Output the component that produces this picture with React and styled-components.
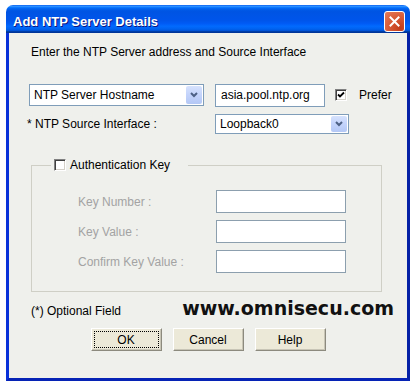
import React from 'react';
import styled, { createGlobalStyle } from 'styled-components';

const Global = createGlobalStyle`
  body {
    margin: 0;
    background: #ffffff;
    font-family: "Liberation Sans", Arial, sans-serif;
    font-size: 12px;
    color: #000;
  }
`;

const Window = styled.div`
  margin: 5px 0 0 6px;
  width: 404px;
  display: flex;
  flex-direction: column;
`;

const TitleBar = styled.div`
  height: 28px;
  box-sizing: border-box;
  padding: 5px 5px 0 7px;
  display: flex;
  align-items: center;
  justify-content: space-between;
  border-radius: 7px 7px 0 0;
  background: linear-gradient(to bottom, #0058ee 0%, #3593ff 4%, #288eff 6%, #127dff 8%, #036ffc 10%, #0262ee 14%, #0057e5 20%, #0054e3 24%, #0055eb 56%, #005bf5 66%, #026afe 76%, #0062ef 86%, #0052d6 92%, #0040ab 94%, #003092 100%);
`;

const Title = styled.span`
  color: #fff;
  font-family: "Liberation Sans", Arial, sans-serif;
  font-weight: bold;
  font-size: 13px;
  text-shadow: 1px 1px 0 #0a1883;
`;

const CloseButton = styled.div`
  width: 21px;
  height: 21px;
  box-sizing: border-box;
  border: 1px solid #fff;
  border-radius: 3px;
  background: radial-gradient(circle at 80% 85%, #c23c1a 0%, #d85a36 50%, #e47d5d 100%);
  display: flex;
  align-items: center;
  justify-content: center;
`;

const Body = styled.div`
  height: 345px;
  border: 3px solid #0831d9;
  border-top: none;
  border-right-color: #0521a6;
  border-bottom-color: #0623b5;
  background: #eff0ec;
  display: flex;
  flex-direction: column;
`;

const Intro = styled.div`
  margin: 12px 0 0 22px;
  line-height: 14px;
`;

const Row = styled.div`
  display: flex;
  align-items: center;
  margin-top: ${p => p.$top}px;
  padding-left: ${p => p.$left}px;
  height: ${p => p.$height}px;
`;

const Combo = styled.div`
  width: ${p => p.$width}px;
  height: ${p => p.$height}px;
  box-sizing: border-box;
  border: 1px solid #7f9db9;
  background: #fff;
  display: flex;
  align-items: center;
  padding: 1px;
`;

const ComboText = styled.span`
  flex: 1;
  padding-left: 3px;
  white-space: nowrap;
`;

const ArrowButton = styled.div`
  width: 16px;
  align-self: stretch;
  border-radius: 2px;
  background: linear-gradient(to bottom, #d6e2fd 0%, #c3d3fb 50%, #b3c7f5 100%);
  display: flex;
  align-items: center;
  justify-content: center;
`;

const TextField = styled.div`
  width: ${p => p.$width}px;
  height: ${p => p.$height}px;
  box-sizing: border-box;
  border: 1px solid ${p => (p.$disabled ? '#8c9fae' : '#7f9db9')};
  background: #fff;
  padding-left: 5px;
  display: flex;
  align-items: center;
  white-space: nowrap;
`;

const Check = styled.div`
  width: 12px;
  height: 12px;
  box-sizing: border-box;
  border-top: 1px solid #808080;
  border-left: 1px solid #808080;
  border-bottom: 1px solid #fff;
  border-right: 1px solid #fff;
  box-shadow: inset 1px 1px 0 #404040, inset -1px -1px 0 #d4d0c8;
  background: #fff;
  display: flex;
  align-items: center;
  justify-content: center;
  flex-shrink: 0;
`;

const Label = styled.span`
  color: ${p => (p.$disabled ? '#a3a3a3' : '#000')};
  margin-left: ${p => p.$gap || 0}px;
  white-space: nowrap;
`;

const Group = styled.fieldset`
  margin: 24px 0 0 22px;
  width: 351px;
  box-sizing: border-box;
  padding: 18px 0 18px 0;
  border: 1px solid #cfcfc6;
  display: flex;
  flex-direction: column;
  gap: 7px;
  min-width: 0;
`;

const Legend = styled.legend`
  margin-left: 19px;
  padding: 0 18px 0 3px;
  height: 14px;
  display: flex;
  align-items: center;
  gap: 4px;
`;

const KeyRow = styled.div`
  padding-left: 46px;
  display: grid;
  grid-template-columns: 138px 130px;
  align-items: center;
`;

const Footer = styled.div`
  margin-top: 5px;
  height: 22px;
  padding: 0 13px 0 22px;
  display: flex;
  align-items: baseline;
  justify-content: space-between;
`;

const Brand = styled.span`
  font-family: "DejaVu Sans", Verdana, sans-serif;
  font-weight: bold;
  font-size: 19px;
  color: #111;
`;

const Buttons = styled.div`
  margin-top: 9px;
  display: flex;
  justify-content: center;
  gap: 11px;
`;

const Button = styled.div`
  width: 71px;
  height: 23px;
  box-sizing: border-box;
  background: #ece9d8;
  border-top: 1px solid #fff;
  border-left: 1px solid #fff;
  border-right: 1px solid #8c8a7e;
  border-bottom: 1px solid #8c8a7e;
  box-shadow: inset -1px -1px 0 #c8c5b6;
  display: flex;
  align-items: center;
  justify-content: center;
  padding: 2px;
`;

const Focus = styled.div`
  flex: 1;
  align-self: stretch;
  border: 1px dotted ${p => (p.$focused ? '#000' : 'transparent')};
  display: flex;
  align-items: center;
  justify-content: center;
`;

const Chevron = () => (
  <svg width="8" height="6" viewBox="0 0 8 6">
    <path d="M1 1 L4 4 L7 1" fill="none" stroke="#4d6185" strokeWidth="2" />
  </svg>
);

const Tick = () => (
  <svg width="8" height="8" viewBox="0 0 8 8">
    <path d="M1 3.5 L3 5.5 L7 1.5" fill="none" stroke="#000" strokeWidth="1.8" />
  </svg>
);

const CloseX = () => (
  <svg width="11" height="11" viewBox="0 0 11 11">
    <path d="M1.5 1.5 L9.5 9.5 M9.5 1.5 L1.5 9.5" stroke="#fff" strokeWidth="2" strokeLinecap="square" />
  </svg>
);

const keyFields = ['Key Number :', 'Key Value :', 'Confirm Key Value :'];

const App = () => {
  return (
    <>
      <Global />
      <Window>
        <TitleBar>
          <Title>Add NTP Server Details</Title>
          <CloseButton>
            <CloseX />
          </CloseButton>
        </TitleBar>
        <Body>
          <Intro>Enter the NTP Server address and Source Interface</Intro>

          <Row $top={25} $left={20} $height={22}>
            <Combo $width={175} $height={22}>
              <ComboText>NTP Server Hostname</ComboText>
              <ArrowButton><Chevron /></ArrowButton>
            </Combo>
            <TextField $width={110} $height={23} style={{ marginLeft: 11 }}>asia.pool.ntp.org</TextField>
            <Check style={{ marginLeft: 10 }}><Tick /></Check>
            <Label $gap={12}>Prefer</Label>
          </Row>

          <Row $top={8} $left={18} $height={20}>
            <Label style={{ width: 188 }}>* NTP Source Interface :</Label>
            <Combo $width={134} $height={20}>
              <ComboText>Loopback0</ComboText>
              <ArrowButton><Chevron /></ArrowButton>
            </Combo>
          </Row>

          <Group>
            <Legend>
              <Check />
              <Label>Authentication Key</Label>
            </Legend>
            {keyFields.map(name => (
              <KeyRow key={name}>
                <Label $disabled>{name}</Label>
                <TextField $width={130} $height={23} $disabled />
              </KeyRow>
            ))}
          </Group>

          <Footer>
            <Label>(*) Optional Field</Label>
            <Brand>www.omnisecu.com</Brand>
          </Footer>

          <Buttons>
            <Button><Focus $focused>OK</Focus></Button>
            <Button><Focus>Cancel</Focus></Button>
            <Button><Focus>Help</Focus></Button>
          </Buttons>
        </Body>
      </Window>
    </>
  );
};

export default App;
